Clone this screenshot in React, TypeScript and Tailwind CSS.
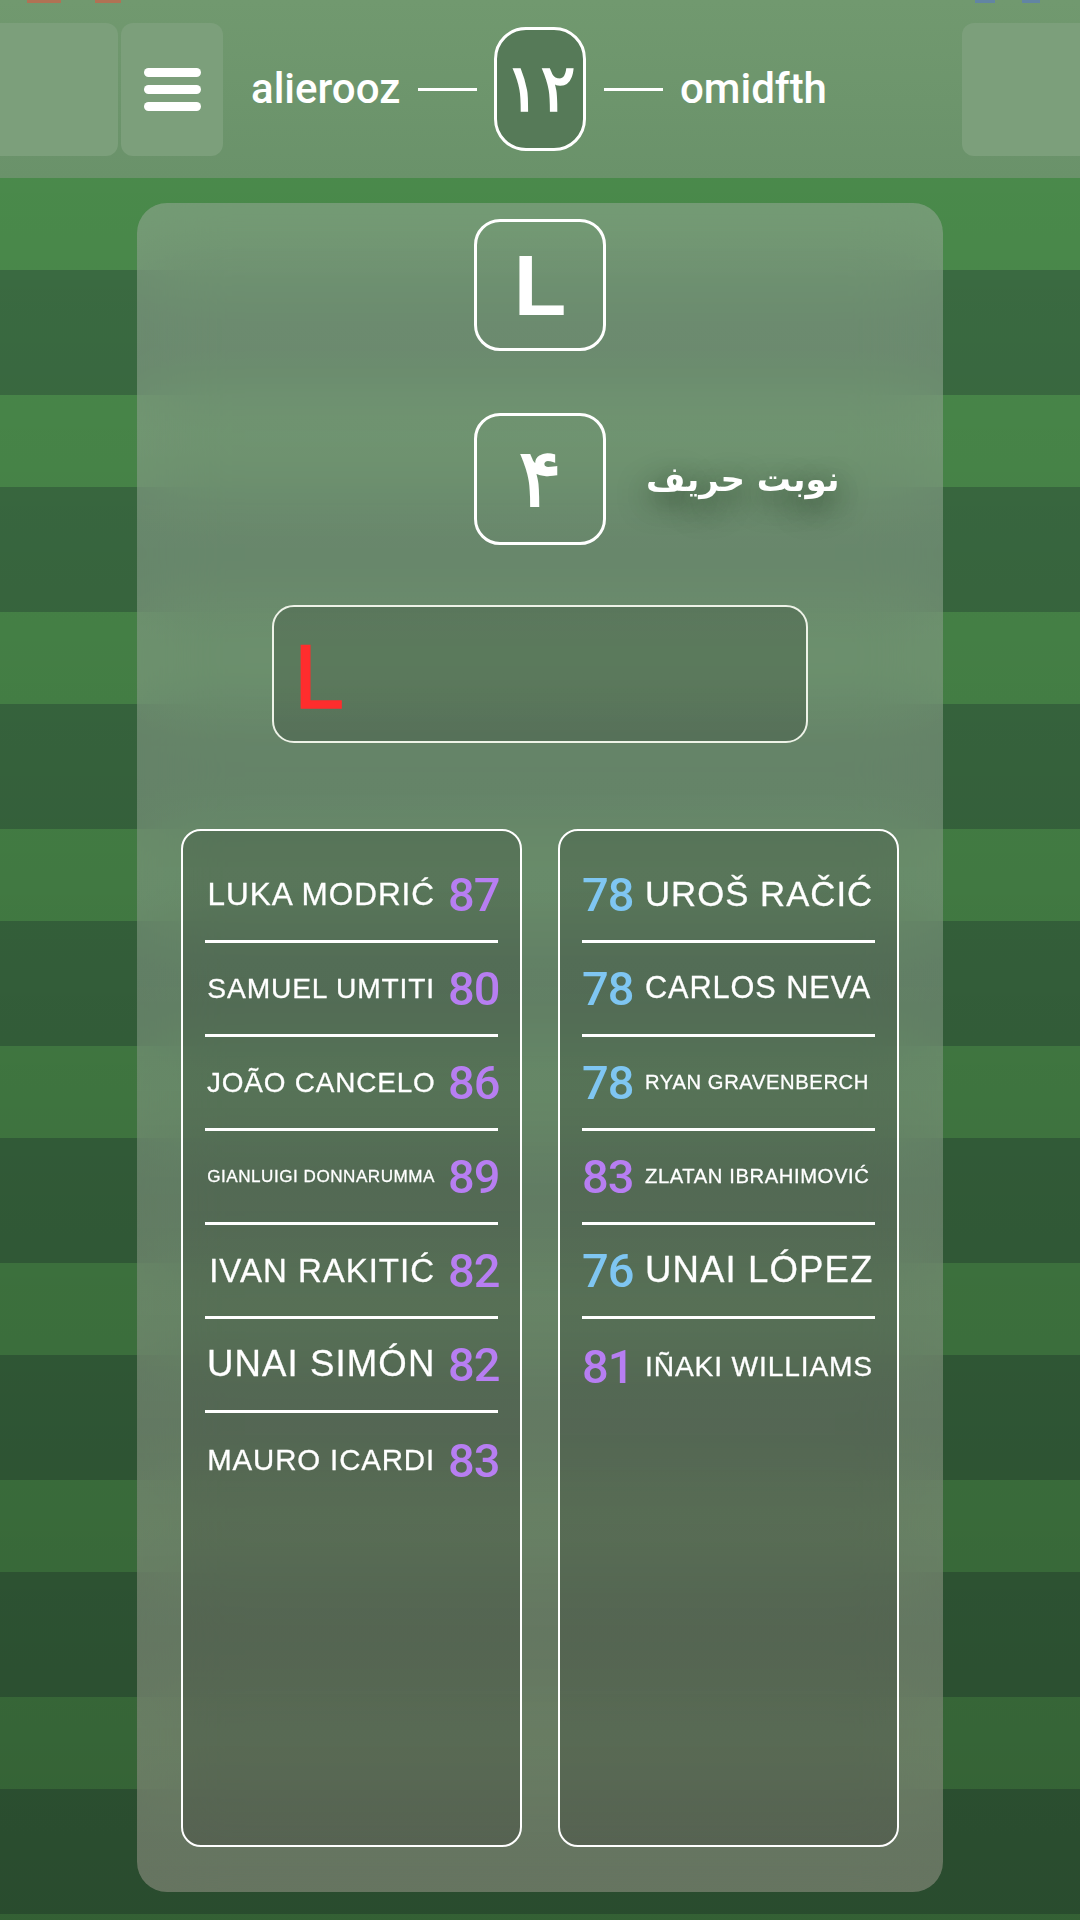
import React from 'react'

type Player = { name: string; rating: number; size: number; color: 'purple' | 'blue' }

// font sizes picked so every name fills the same 228px slot
const home: Player[] = [
  { name: 'LUKA MODRIĆ', rating: 87, size: 31.5, color: 'purple' },
  { name: 'SAMUEL UMTITI', rating: 80, size: 28.2, color: 'purple' },
  { name: 'JOÃO CANCELO', rating: 86, size: 27.9, color: 'purple' },
  { name: 'GIANLUIGI DONNARUMMA', rating: 89, size: 17.1, color: 'purple' },
  { name: 'IVAN RAKITIĆ', rating: 82, size: 33, color: 'purple' },
  { name: 'UNAI SIMÓN', rating: 82, size: 36.6, color: 'purple' },
  { name: 'MAURO ICARDI', rating: 83, size: 29.4, color: 'purple' },
]

const away: Player[] = [
  { name: 'UROŠ RAČIĆ', rating: 78, size: 34.7, color: 'blue' },
  { name: 'CARLOS NEVA', rating: 78, size: 30.7, color: 'blue' },
  { name: 'RYAN GRAVENBERCH', rating: 78, size: 20.2, color: 'blue' },
  { name: 'ZLATAN IBRAHIMOVIĆ', rating: 83, size: 20.2, color: 'purple' },
  { name: 'UNAI LÓPEZ', rating: 76, size: 36.6, color: 'blue' },
  { name: 'IÑAKI WILLIAMS', rating: 81, size: 28.2, color: 'purple' },
]

function Rating({ value, color }: { value: number; color: 'purple' | 'blue' }) {
  return (
    <span
      className={
        "w-[50px] shrink-0 text-center text-[47px] leading-none tracking-[-1px] font-medium font-['Roboto',sans-serif] " +
        (color === 'purple' ? 'text-[#b77ef2]' : 'text-[#7fc6f2]')
      }
    >
      {value}
    </span>
  )
}

function PlayerCard({ players, side }: { players: Player[]; side: 'left' | 'right' }) {
  return (
    <div className="flex-1 rounded-[20px] border-2 border-white bg-black/15 px-[22px] pt-[18px]">
      {players.map((p, i) => (
        <div
          key={p.name}
          className={
            'h-[94px] flex items-center gap-[13px] ' +
            (side === 'left' ? 'justify-end ' : 'justify-start ') +
            (i < players.length - 1 ? 'border-b-[3px] border-white' : '')
          }
        >
          {side === 'right' && <Rating value={p.rating} color={p.color} />}
          <span
            className={
              "w-[228px] whitespace-nowrap text-white tracking-[0.03em] [-webkit-text-stroke:0.3px_#fff] font-['Liberation_Sans',Arial,sans-serif] leading-none " +
              (side === 'left' ? 'text-right' : 'text-left')
            }
            style={{ fontSize: p.size }}
          >
            {p.name}
          </span>
          {side === 'left' && <Rating value={p.rating} color={p.color} />}
        </div>
      ))}
    </div>
  )
}

export default function App() {
  return (
    <div className="w-[1080px] h-[1920px] overflow-hidden flex flex-col bg-[linear-gradient(180deg,rgba(0,0,0,0)_8%,rgba(0,0,0,0.3)_100%),repeating-linear-gradient(180deg,#4a8a4b_-39px,#4a8a4b_53px,#3b6c42_53px,#3b6c42_178px)]">
      {/* top bar */}
      <div className="relative h-[178px] shrink-0 flex items-center bg-linear-to-b from-[#71996f] to-[#6a926a] font-['Roboto',sans-serif]">
        {/* bits of the score badges that sit above the visible area */}
        <div className="absolute top-0 left-[27px] w-[34px] h-[3px] bg-[#c0684e]/80" />
        <div className="absolute top-0 left-[95px] w-[26px] h-[3px] bg-[#c0684e]/80" />
        <div className="absolute top-0 left-[975px] w-[20px] h-[3px] bg-[#5f7fb0]/80" />
        <div className="absolute top-0 left-[1022px] w-[18px] h-[3px] bg-[#5f7fb0]/80" />

        <div className="-ml-[20px] w-[138px] h-[133px] rounded-xl bg-[#7c9f7b]" />
        <div className="ml-[3px] w-[102px] h-[133px] rounded-xl bg-[#7c9f7b] flex items-center justify-center">
          <svg width="57" height="43" viewBox="0 0 57 43">
            <rect x="0" y="0" width="57" height="9" rx="4.5" fill="#fff" />
            <rect x="0" y="17" width="57" height="9" rx="4.5" fill="#fff" />
            <rect x="0" y="34" width="57" height="9" rx="4.5" fill="#fff" />
          </svg>
        </div>
        <div className="ml-[28px] w-[576px] flex items-center justify-between text-white">
          <span className="text-[42px] leading-none font-medium">alierooz</span>
          <div className="w-[59px] h-[3px] bg-white" />
          <div className="w-[92px] h-[124px] rounded-[32px] border-[3px] border-white bg-[#567a58] flex items-center justify-center">
            <span className="text-[66px] leading-none [-webkit-text-stroke:1.5px_#fff] font-['DejaVu_Sans',sans-serif]">۱۲</span>
          </div>
          <div className="w-[59px] h-[3px] bg-white" />
          <span className="text-[42px] leading-none font-medium">omidfth</span>
        </div>
        <div className="ml-auto -mr-[20px] w-[138px] h-[133px] rounded-xl bg-[#7c9f7b]" />
      </div>

      {/* main panel */}
      <div className="mx-[137px] mt-[25px] h-[1689px] rounded-[30px] bg-[#9aa69a]/45 bg-linear-to-b from-white/5 via-transparent to-[#7a7565]/35 backdrop-blur-[40px] flex flex-col items-center pt-4 px-[44px] pb-[45px]">
        <div className="w-[132px] h-[132px] rounded-[26px] border-[3px] border-white flex items-center justify-center">
          <span className="text-[86px] leading-none font-bold text-white font-['Liberation_Sans',Arial,sans-serif]">L</span>
        </div>

        <div className="mt-[62px] w-full grid grid-cols-[1fr_132px_1fr] items-center">
          <div />
          <div className="w-[132px] h-[132px] rounded-[26px] border-[3px] border-white flex items-center justify-center">
            <span className="text-[80px] leading-none [-webkit-text-stroke:2px_#fff] text-white font-['DejaVu_Sans',sans-serif]">۴</span>
          </div>
          <div className="pl-[40px]">
            <span dir="rtl" className="text-[34px] font-bold text-white font-['DejaVu_Sans',sans-serif] [text-shadow:0_8px_30px_rgba(20,40,20,0.9)]">
              نوبت حریف
            </span>
          </div>
        </div>

        <div className="mt-[60px] w-[536px] h-[138px] rounded-[22px] border-2 border-[#eef3e8] bg-black/15 flex items-center pl-[20px] pt-[6px]">
          <span className="text-[90px] leading-none text-[#ff2d2d] [-webkit-text-stroke:1.5px_#ff2d2d] font-['Liberation_Sans',Arial,sans-serif]">L</span>
        </div>

        <div className="mt-[86px] w-full flex-1 flex gap-[36px]">
          <PlayerCard players={home} side="left" />
          <PlayerCard players={away} side="right" />
        </div>
      </div>
    </div>
  )
}
